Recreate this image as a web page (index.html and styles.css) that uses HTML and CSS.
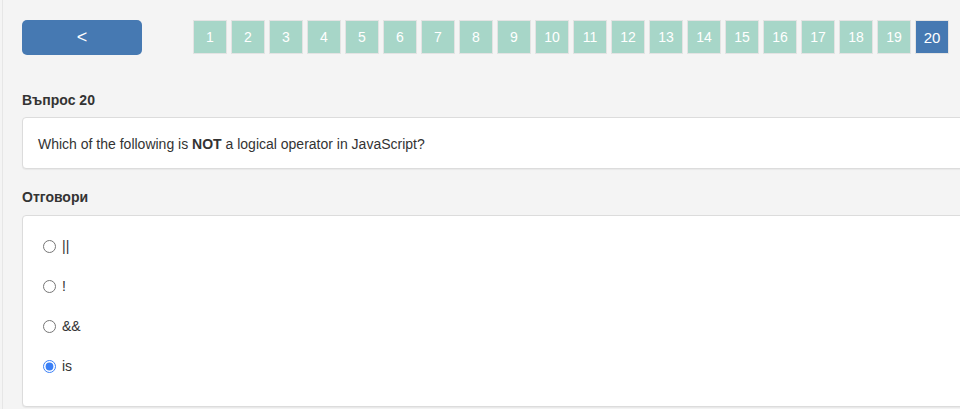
FILE: index.html
```html
<!DOCTYPE html>
<html lang="bg">
<head>
<meta charset="utf-8">
<title>Въпрос 20</title>
<link rel="stylesheet" href="styles.css">
</head>
<body>
<div class="page">
  <div class="nav">
    <button class="back" type="button">&lt;</button>
    <div class="pages">
      <span class="pg">1</span><span class="pg">2</span><span class="pg">3</span><span class="pg">4</span><span class="pg">5</span><span class="pg">6</span><span class="pg">7</span><span class="pg">8</span><span class="pg">9</span><span class="pg">10</span><span class="pg">11</span><span class="pg">12</span><span class="pg">13</span><span class="pg">14</span><span class="pg">15</span><span class="pg">16</span><span class="pg">17</span><span class="pg">18</span><span class="pg">19</span><span class="pg active">20</span>
    </div>
  </div>

  <h4 class="title title-q">Въпрос 20</h4>
  <div class="card card-q">Which of the following is <b>NOT</b> a logical operator in JavaScript?</div>

  <h4 class="title title-a">Отговори</h4>
  <div class="card card-a">
    <label class="opt"><input type="radio" name="a"><span>||</span></label>
    <label class="opt"><input type="radio" name="a"><span>!</span></label>
    <label class="opt"><input type="radio" name="a"><span>&amp;&amp;</span></label>
    <label class="opt"><input type="radio" name="a" checked><span>is</span></label>
  </div>
</div>
</body>
</html>
```
FILE: styles.css
```css
html, body {
  margin: 0;
  padding: 0;
  overflow: hidden;
  background: #f4f4f4;
}
body {
  font-family: "Liberation Sans", Arial, sans-serif;
  font-size: 14px;
  color: #333;
}
.page {
  margin-left: 2px;
  border-left: 1px solid #e6e6e6;
  padding: 20px 0 0 19px;
  min-height: 409px;
  box-sizing: border-box;
}
.nav {
  display: flex;
  align-items: flex-start;
}
.back {
  width: 120px;
  height: 35px;
  border: none;
  border-radius: 5px;
  background: #4679b2;
  color: #fff;
  font-family: "Liberation Sans", Arial, sans-serif;
  font-size: 18px;
  line-height: 35px;
  padding: 0;
  margin: 0;
}
.pages {
  display: flex;
  gap: 4px;
  margin-left: 51px;
}
.pg {
  box-sizing: border-box;
  width: 34px;
  height: 34px;
  border: 1px solid #e3e3e3;
  background: #a7d6c8;
  color: #fff;
  font-size: 14px;
  display: flex;
  align-items: center;
  justify-content: center;
}
.pg.active {
  background: #4679b2;
  font-size: 15px;
}
.title {
  margin: 0;
  font-size: 14px;
  font-weight: bold;
  line-height: 20px;
}
.title-q {
  margin-top: 35px;
}
.title-a {
  margin-top: 18px;
}
.card {
  background: #fff;
  border: 1px solid #dcdcdc;
  border-radius: 4px;
  box-shadow: 0 1px 1px rgba(0,0,0,0.05);
  margin-top: 7px;
  margin-right: -12px;
}
.card-a {
  margin-top: 8px;
}
.card-q {
  padding: 16px 15px 14px;
  line-height: 20px;
}
.card-a {
  padding: 20px 20px 30px;
  display: flex;
  flex-direction: column;
  gap: 20px;
}
.opt {
  display: flex;
  align-items: center;
  height: 20px;
  gap: 6px;
}
.opt input {
  margin: 0;
  width: 13px;
  height: 13px;
  accent-color: #3a7ff6;
}
```
